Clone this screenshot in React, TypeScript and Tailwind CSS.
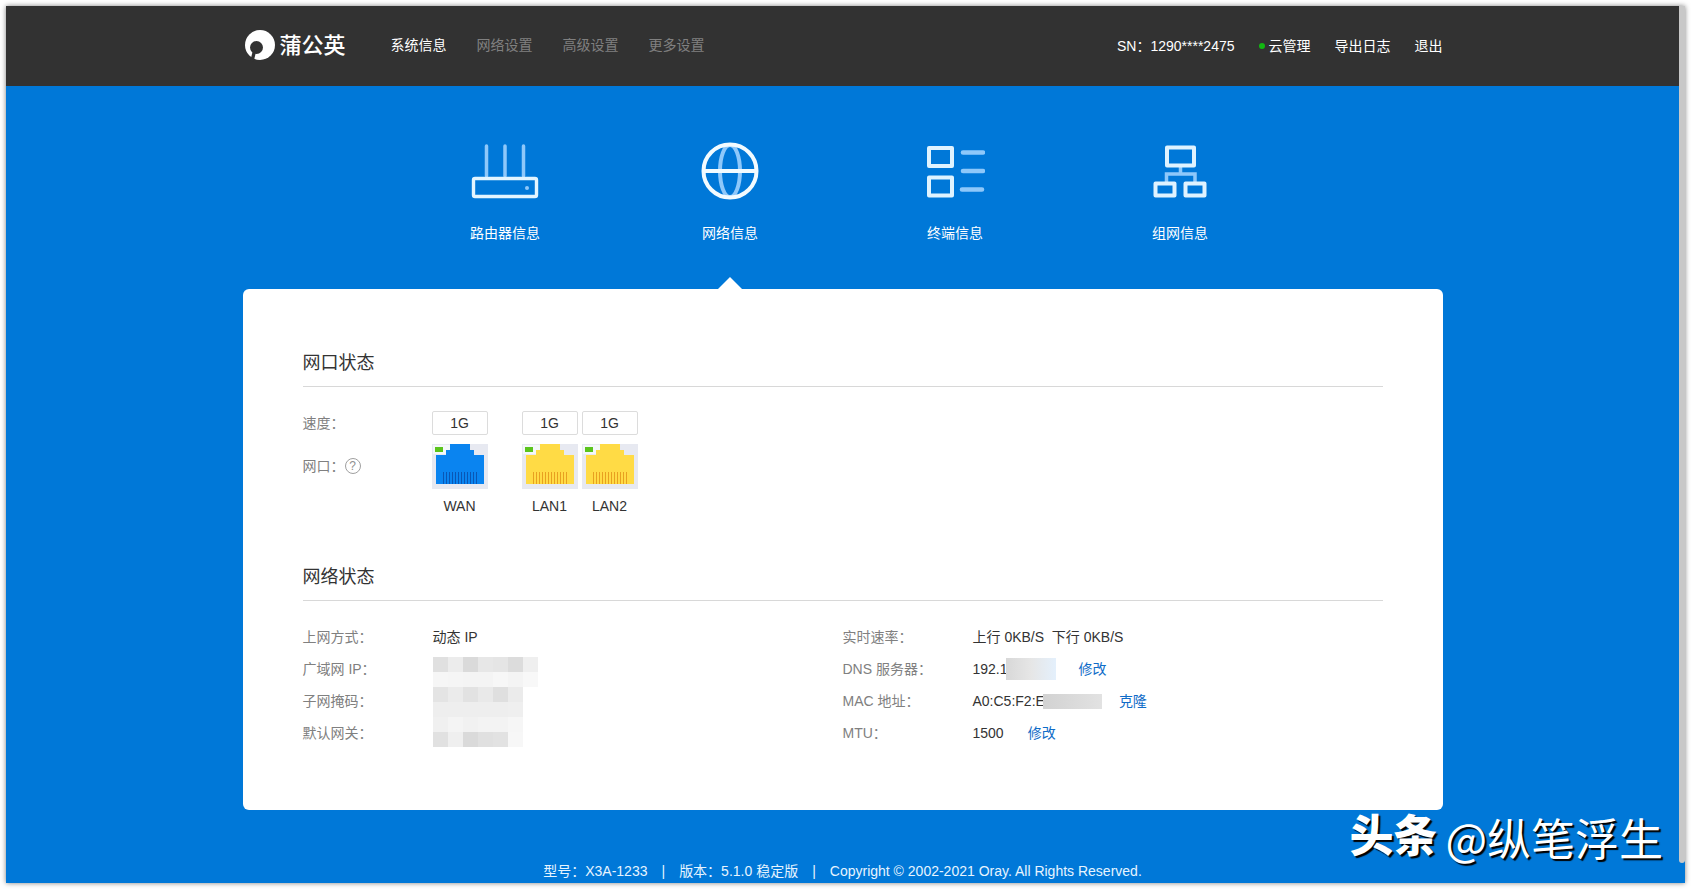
import React from 'react';

const topNav = ['系统信息', '网络设置', '高级设置', '更多设置'];

function Logo() {
  return (
    <a href="#home" className="flex items-center gap-1 text-white">
      <svg width="32" height="32" viewBox="0 0 32 32" aria-hidden="true">
        <circle cx="16" cy="15" r="15" fill="#fff" />
        <circle cx="12.5" cy="17.5" r="6.5" fill="#323232" />
        <path d="M10.5 21 L8 31" stroke="#323232" strokeWidth="3.4" />
      </svg>
      <span className="text-[22px] leading-8 font-medium">蒲公英</span>
    </a>
  );
}

function RouterIcon() {
  return (
    <svg width="68" height="60" viewBox="0 0 68 60" fill="none" strokeLinecap="round">
      <g stroke="#8ec8fa" strokeWidth="3.5">
        <path d="M15.5 5V35M34 5V35M52.5 5V35" />
      </g>
      <rect x="2.5" y="37.5" width="63" height="18" rx="1.5" stroke="#e3f5ff" strokeWidth="3.4" />
      <circle cx="56" cy="47" r="2" fill="#8ec8fa" />
    </svg>
  );
}

function GlobeIcon() {
  return (
    <svg width="60" height="60" viewBox="0 0 60 60" fill="none">
      <ellipse cx="30" cy="30" rx="10" ry="26" stroke="#8ec8fa" strokeWidth="4" />
      <path d="M3 30H57" stroke="#f2fbff" strokeWidth="4" />
      <circle cx="30" cy="30" r="26.5" stroke="#f2fbff" strokeWidth="4" />
    </svg>
  );
}

function ListIcon() {
  return (
    <svg width="60" height="60" viewBox="0 0 60 60" fill="none">
      <g stroke="#dff3ff" strokeWidth="4" strokeLinejoin="round">
        <rect x="4" y="7" width="23" height="18" />
        <rect x="4" y="36.5" width="23" height="18" />
      </g>
      <path d="M38 11.5H58M38 30H58M37 48.5H57" stroke="#8ec8fa" strokeWidth="4.6" strokeLinecap="round" />
    </svg>
  );
}

function TopologyIcon() {
  return (
    <svg width="60" height="60" viewBox="0 0 60 60" fill="none">
      <path d="M30.5 26V33M16.5 41V33H45V41" stroke="#8ec8fa" strokeWidth="3.5" />
      <g stroke="#dff3ff" strokeWidth="4" strokeLinejoin="round">
        <rect x="17" y="6.5" width="27" height="18" />
        <rect x="5.5" y="42.5" width="19" height="12" />
        <rect x="35.5" y="42.5" width="19" height="12" />
      </g>
    </svg>
  );
}

const tabs = [
  { label: '路由器信息', icon: <RouterIcon />, active: false },
  { label: '网络信息', icon: <GlobeIcon />, active: true },
  { label: '终端信息', icon: <ListIcon />, active: false },
  { label: '组网信息', icon: <TopologyIcon />, active: false },
];

function Port({ speed, name, color, pin }: { speed: string; name: string; color: string; pin: string }) {
  return (
    <div className="flex w-14 flex-col items-center">
      <span className="h-6 w-full rounded-xs border border-[#dcdcdc] text-center leading-[22px]">{speed}</span>
      <svg className="mt-[9px]" width="56" height="45" viewBox="0 0 56 45" shapeRendering="crispEdges" aria-hidden="true">
        <rect width="56" height="45" fill="#e7e9f1" />
        <path d="M1 1H18V10H1Z" fill="#f4f8fa" />
        <rect x="3" y="3" width="8" height="5" fill="#5bc41c" />
        <path d="M18 0H38V6H42V11H52V40H4V11H14V6H18Z" fill={color} />
        {Array.from({ length: 12 }, (_, i) => (
          <rect key={i} x={11 + i * 3} y="28" width="1" height="12" fill={pin} />
        ))}
      </svg>
      <span className="mt-[7px] leading-5">{name}</span>
    </div>
  );
}

// grey levels of the masked address blocks, one row per line of cells
const mask = [
  ['#e0e0e0', '#ececec', '#dadada', '#e7e7e7', '#e5e5e5', '#dcdcdc', '#efefef'],
  ['#f6f6f6', '#f5f5f5', '#f4f4f4', '#f4f4f4', '#f7f7f7', '#f4f4f4', '#f8f8f8'],
  ['#e4e4e4', '#ebebeb', '#e2e2e2', '#e9e9e9', '#dfdfdf', '#ebebeb', '#ffffff'],
  ['#eeeeee', '#eeeeee', '#eeeeee', '#eeeeee', '#eeeeee', '#efefef', '#ffffff'],
  ['#f0f0f0', '#f4f4f4', '#f1f1f1', '#f3f3f3', '#f3f3f3', '#f6f6f6', '#ffffff'],
  ['#e1e1e1', '#efefef', '#dadada', '#e0e0e0', '#e2e2e2', '#f7f7f7', '#ffffff'],
];

function Row({ label, children }: { label: string; children?: React.ReactNode }) {
  return (
    <div className="flex h-8 items-center">
      <dt className="w-[130px] shrink-0 text-[#808080]">{label}</dt>
      <dd className="flex items-center whitespace-pre">{children}</dd>
    </div>
  );
}

function SectionTitle({ children }: { children: React.ReactNode }) {
  return <h2 className="border-b border-[#d8d8d8] pb-2.5 text-lg leading-[26px] text-[#333]">{children}</h2>;
}

export default function App() {
  return (
    <div className="flex min-h-screen bg-white p-1.5 font-['Liberation_Sans','Noto_Sans_CJK_SC',sans-serif] text-sm text-[#333]" lang="zh-CN">
      <div className="relative flex flex-1 bg-[#0078d8] shadow-[0_0_5px_rgba(0,0,0,0.5)]">
        <div className="flex min-w-0 flex-1 flex-col">
          <header className="bg-[#323232]">
            <div className="mx-auto flex h-20 max-w-[1200px] items-center">
              <div className="pl-px">
                <Logo />
              </div>
              <nav className="ml-[45px] flex gap-[30px] pb-0.5">
                {topNav.map((item, i) => (
                  <a key={item} href="#nav" className={i === 0 ? 'text-white' : 'text-[#808080]'}>
                    {item}
                  </a>
                ))}
              </nav>
              <div className="ml-auto flex items-center text-white">
                <span>SN：1290****2475</span>
                <a href="#cloud" className="ml-6 flex items-center gap-1">
                  <i className="size-1.5 rounded-full bg-[#12b812]" />
                  云管理
                </a>
                <a href="#log" className="ml-6">导出日志</a>
                <a href="#logout" className="ml-6">退出</a>
              </div>
            </div>
          </header>

          {/* Section tabs */}
          <nav className="mx-auto grid w-full max-w-[900px] grid-cols-4 pt-[55px]">
            {tabs.map((tab) => (
              <a key={tab.label} href="#tab" className="flex flex-col items-center text-white">
                {tab.icon}
                <span className="mt-[22px] leading-5">{tab.label}</span>
                <span
                  className={
                    tab.active
                      ? 'mt-[34px] h-3 w-6 bg-white [clip-path:polygon(50%_0,100%_100%,0_100%)]'
                      : 'mt-[34px] h-3 w-6'
                  }
                />
              </a>
            ))}
          </nav>

          <main className="mx-auto w-full max-w-[1200px] rounded-md bg-white px-[60px] pt-[61px] pb-[61px]">
            <section>
              <SectionTitle>网口状态</SectionTitle>
              <div className="mt-6 flex">
                <div className="w-[129px] text-[#808080]">
                  <div className="leading-6">速度：</div>
                  <div className="mt-[19px] flex items-center leading-6">
                    网口：
                    <button
                      type="button"
                      aria-label="帮助"
                      className="size-4 rounded-full border border-[#a0a0a0] text-center text-xs leading-[14px] text-[#909090]"
                    >
                      ?
                    </button>
                  </div>
                </div>
                <Port speed="1G" name="WAN" color="#0a84f0" pin="#0a56b4" />
                <div className="ml-[34px] flex gap-1">
                  <Port speed="1G" name="LAN1" color="#ffdb45" pin="#e8a020" />
                  <Port speed="1G" name="LAN2" color="#ffdb45" pin="#e8a020" />
                </div>
              </div>
            </section>

            <section className="mt-12">
              <SectionTitle>网络状态</SectionTitle>
              <div className="mt-5 grid grid-cols-2">
                <dl className="relative">
                  <Row label="上网方式：">动态 IP</Row>
                  <Row label="广域网 IP：" />
                  <Row label="子网掩码：" />
                  <Row label="默认网关：" />
                  <div className="absolute top-9 left-[130px] grid grid-cols-[repeat(7,15px)]">
                    {mask.flat().map((c, i) => (
                      <i key={i} className="h-[15px]" style={{ backgroundColor: c }} />
                    ))}
                  </div>
                </dl>
                <dl>
                  <Row label="实时速率：">{'上行 0KB/S  下行 0KB/S'}</Row>
                  <Row label="DNS 服务器：">
                    192.1
                    <i className="-ml-0.5 h-[22px] w-[50px] bg-linear-to-r from-[#d8d8d8] via-[#e6e6e6] to-[#e4f0fc]" />
                    <a href="#dns" className="ml-[23px] text-[#0f6cc8]">修改</a>
                  </Row>
                  <Row label="MAC 地址：">
                    A0:C5:F2:E
                    <i className="-ml-0.5 h-[15px] w-[59px] bg-linear-to-r from-[#d2d2d2] to-[#e2e2e2]" />
                    <a href="#mac" className="ml-[17px] text-[#0f6cc8]">克隆</a>
                  </Row>
                  <Row label="MTU：">
                    1500
                    <a href="#mtu" className="ml-6 text-[#0f6cc8]">修改</a>
                  </Row>
                </dl>
              </div>
            </section>
          </main>

          <footer className="mt-auto flex justify-center gap-3.5 pt-6 pb-0.5 leading-5 text-[#e6f4ff]">
            <span>型号：X3A-1233</span>
            <span>|</span>
            <span>版本：5.1.0 稳定版</span>
            <span>|</span>
            <span>Copyright © 2002-2021 Oray. All Rights Reserved.</span>
          </footer>
        </div>

        {/* Scrollbar */}
        <div className="mb-5 w-1.5 rounded-b-sm bg-[#c8c8c8]" />

        <div className="absolute right-[22px] bottom-4 flex items-center gap-2 text-[44px] leading-[60px] text-white [text-shadow:2px_2px_1px_#000]">
          <span className="font-black">头条</span>
          <span className="font-['Noto_Sans_CJK_SC',sans-serif]">@纵笔浮生</span>
        </div>
      </div>
    </div>
  );
}
